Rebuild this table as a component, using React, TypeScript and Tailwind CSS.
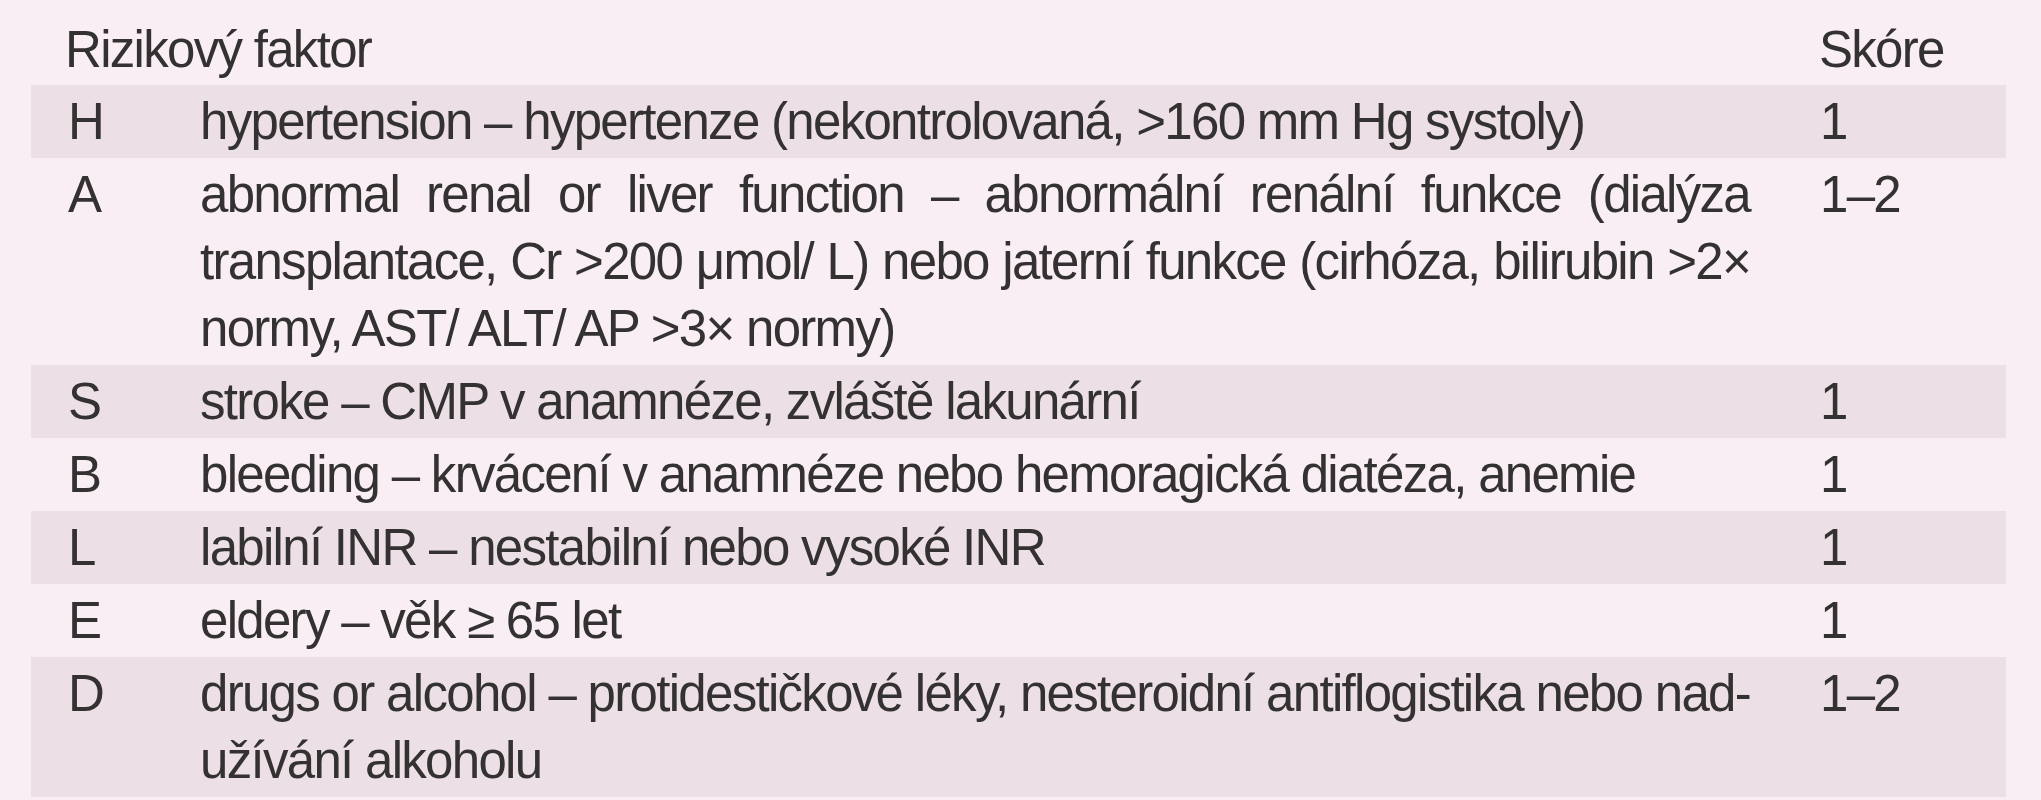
type Row = {
  letter: string
  lines: string[]
  score: string
  shaded: boolean
}

const rows: Row[] = [
  {
    letter: 'H',
    lines: ['hypertension – hypertenze (nekontrolovaná, >160 mm Hg systoly)'],
    score: '1',
    shaded: true,
  },
  {
    letter: 'A',
    lines: [
      'abnormal renal or liver function – abnormální renální funkce (dialýza',
      'transplantace, Cr >200 μmol/ L) nebo jaterní funkce (cirhóza, bilirubin >2×',
      'normy, AST/ ALT/ AP >3× normy)',
    ],
    score: '1–2',
    shaded: false,
  },
  {
    letter: 'S',
    lines: ['stroke – CMP v anamnéze, zvláště lakunární'],
    score: '1',
    shaded: true,
  },
  {
    letter: 'B',
    lines: ['bleeding – krvácení v anamnéze nebo hemoragická diatéza, anemie'],
    score: '1',
    shaded: false,
  },
  {
    letter: 'L',
    lines: ['labilní INR – nestabilní nebo vysoké INR'],
    score: '1',
    shaded: true,
  },
  {
    letter: 'E',
    lines: ['eldery – věk ≥ 65 let'],
    score: '1',
    shaded: false,
  },
  {
    letter: 'D',
    lines: [
      'drugs or alcohol – protidestičkové léky, nesteroidní antiflogistika nebo nad-',
      'užívání alkoholu',
    ],
    score: '1–2',
    shaded: true,
  },
]

function RiskRow({ row }: { row: Row }) {
  return (
    <div
      className={`grid grid-cols-[132px_1550px_1fr] pl-[37px] py-[3px] ${row.shaded ? 'bg-[#ecdfe6]' : ''}`}
    >
      <div>{row.letter}</div>
      <div>
        {/* each printed line kept as its own block so the breaks match */}
        {row.lines.map((line, i) => (
          <div
            key={i}
            className={i < row.lines.length - 1 ? 'text-justify [text-align-last:justify]' : ''}
          >
            {line}
          </div>
        ))}
      </div>
      <div className="pl-[70px]">{row.score}</div>
    </div>
  )
}

export default function App() {
  return (
    <div className="w-[2041px] h-[800px] bg-[#f8eef4] pl-[31px] pr-[35px] font-['Liberation_Sans',Arial,sans-serif] text-[51px] leading-[67px] tracking-[-1.7px] text-[#333132]">
      {/* Header */}
      <div className="grid grid-cols-[1754px_1fr] pl-[34px] pt-[16px] pb-[2px]">
        <div>Rizikový faktor</div>
        <div>Skóre</div>
      </div>

      {rows.map(row => (
        <RiskRow key={row.letter} row={row} />
      ))}
    </div>
  )
}
